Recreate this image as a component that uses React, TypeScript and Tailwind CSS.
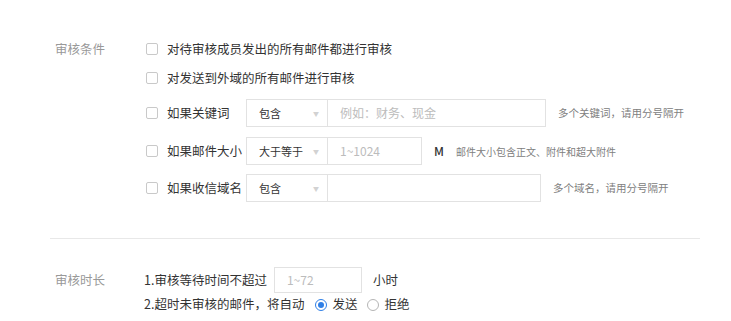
import React from 'react';

const font = { fontFamily: '"Noto Sans CJK SC", "Noto Sans", sans-serif' };

const Checkbox: React.FC = () => (
    <span className="inline-block w-[12px] h-[12px] border border-[#c9c9c9] rounded-[2px] bg-white shrink-0" />
);

const Select: React.FC<{ value: string }> = ({ value }) => (
    <div className="w-[82px] h-full border border-[#e2e2e2] bg-white flex items-center justify-between pl-[12px] pr-[8px] text-[11px] text-[#333]">
        <span>{value}</span>
        <span className="text-[6px] text-[#d2d2d2]">▼</span>
    </div>
);

const Input: React.FC<{ width: string; placeholder?: string }> = ({ width, placeholder }) => (
    <div className={`${width} h-full border border-l-0 border-[#e2e2e2] bg-white flex items-center pl-[12px] text-[12px] text-[#bcbcbc]`}>
        {placeholder}
    </div>
);

const App: React.FC = () => {
    return (
        <div className="w-[731px] h-[321px] bg-white text-[#333] overflow-hidden" style={font}>
            <div className="flex pl-[55px] pt-[39px]">
                <div className="w-[91px] h-[20px] flex items-center text-[12.5px] text-[#999]">审核条件</div>
                <div className="flex flex-col">
                    <div className="h-[20px] flex items-center gap-[9px] text-[12.5px]">
                        <Checkbox />
                        <span>对待审核成员发出的所有邮件都进行审核</span>
                    </div>
                    <div className="h-[20px] mt-[9px] flex items-center gap-[9px] text-[12.5px]">
                        <Checkbox />
                        <span>对发送到外域的所有邮件进行审核</span>
                    </div>
                    <div className="h-[28px] mt-[11px] flex items-center">
                        <Checkbox />
                        <span className="ml-[9px] w-[79px] text-[12.5px]">如果关键词</span>
                        <Select value="包含" />
                        <Input width="w-[218px]" placeholder="例如：财务、现金" />
                        <span className="ml-[12px] text-[10.5px] text-[#808080]">多个关键词，请用分号隔开</span>
                    </div>
                    <div className="h-[28px] mt-[10px] flex items-center">
                        <Checkbox />
                        <span className="ml-[9px] w-[79px] text-[12.5px] whitespace-nowrap">如果邮件大小</span>
                        <Select value="大于等于" />
                        <Input width="w-[94px]" placeholder="1~1024" />
                        <span className="ml-[12px] text-[12px] font-medium">M</span>
                        <span className="ml-[12px] text-[10px] text-[#808080]">邮件大小包含正文、附件和超大附件</span>
                    </div>
                    <div className="h-[28px] mt-[9px] flex items-center">
                        <Checkbox />
                        <span className="ml-[9px] w-[79px] text-[12.5px] whitespace-nowrap">如果收信域名</span>
                        <Select value="包含" />
                        <Input width="w-[213px]" />
                        <span className="ml-[12px] text-[10.5px] text-[#808080]">多个域名，请用分号隔开</span>
                    </div>
                </div>
            </div>

            <div className="ml-[50px] mr-[31px] mt-[36px] h-px bg-[#e8e8e8]" />

            <div className="flex pl-[55px] pt-[28px]">
                <div className="w-[89px] h-[26px] flex items-center text-[12.5px] text-[#999]">审核时长</div>
                <div className="flex flex-col text-[12.5px]">
                    <div className="h-[26px] flex items-center">
                        <span>1.审核等待时间不超过</span>
                        <div className="ml-[7px] w-[88px] h-full border border-[#e2e2e2] flex items-center pl-[12px] text-[12px] text-[#bcbcbc]">
                            1~72
                        </div>
                        <span className="ml-[11px]">小时</span>
                    </div>
                    <div className="h-[23px] flex items-center">
                        <span>2.超时未审核的邮件，将自动</span>
                        <span className="ml-[11px] w-[12px] h-[12px] rounded-full border border-[#2f7fe6] flex items-center justify-center">
                            <span className="w-[6px] h-[6px] rounded-full bg-[#2f7fe6]" />
                        </span>
                        <span className="ml-[5px]">发送</span>
                        <span className="ml-[10px] w-[12px] h-[12px] rounded-full border border-[#b5b5b5]" />
                        <span className="ml-[5px]">拒绝</span>
                    </div>
                </div>
            </div>
        </div>
    );
};

export default App;
